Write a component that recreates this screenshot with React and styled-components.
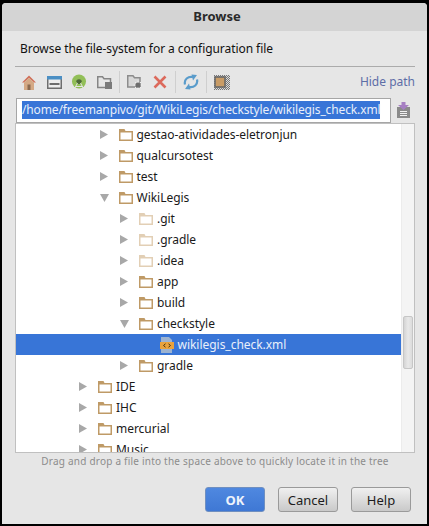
import React from 'react';
import styled, { createGlobalStyle } from 'styled-components';

const GlobalStyle = createGlobalStyle`
  html, body {
    margin: 0;
    padding: 0;
    width: 429px;
    height: 526px;
    overflow: hidden;
    background: #000;
  }
  * { box-sizing: border-box; }
`;

const Dialog = styled.div`
  width: 429px;
  height: 526px;
  padding: 3px 2px 2px 2px;
  background: #000;
  font-family: "Noto Sans", sans-serif;
  color: #1c1c1c;
`;

const Window = styled.div`
  height: 100%;
  display: flex;
  flex-direction: column;
  background: #e6e6e6;
  border-radius: 4px 4px 0 0;
  overflow: hidden;
`;

const TitleBar = styled.div`
  height: 28px;
  flex: none;
  display: flex;
  align-items: center;
  justify-content: center;
  padding: 0 0 2px 5px;
  background: #d4d4d4;
  font-size: 13px;
  font-weight: 700;
  color: #2a2a2a;
`;

const Content = styled.div`
  flex: 1;
  display: flex;
  flex-direction: column;
  padding: 0 12px 0 13px;
`;

const Description = styled.div`
  height: 35px;
  flex: none;
  display: flex;
  align-items: center;
  padding-left: 5px;
  font-size: 12px;
  letter-spacing: -0.06px;
  color: #111;
`;

const Toolbar = styled.div`
  height: 31px;
  flex: none;
  display: flex;
  align-items: center;
  gap: 1px;
  border-top: 1px solid #ababab;
  padding: 0 0 0 2px;
`;

const ToolIcon = styled.div`
  width: 24px;
  height: 22px;
  display: flex;
  align-items: center;
  justify-content: center;
`;

const ToolSeparator = styled.div`
  width: 1px;
  height: 22px;
  margin: 0 2px;
  background: #cfcfcf;
`;

const HidePath = styled.div`
  margin: 0 0 2px auto;
  font-size: 12px;
  color: #5d6da6;
`;

const PathRow = styled.div`
  height: 26px;
  flex: none;
  display: flex;
  align-items: center;
  gap: 0;
  padding-left: 1px;
`;

const PathField = styled.div`
  width: 383px;
  height: 25px;
  display: flex;
  align-items: center;
  padding-left: 5px;
  background: #fff;
  border: 1px solid #a6a6a6;
  font-size: 12px;
  letter-spacing: -0.13px;
  white-space: nowrap;
`;

const PathSelection = styled.span`
  background: #3875d7;
  color: #e8effa;
  line-height: 18px;
`;

const TreePanel = styled.div`
  height: 330px;
  flex: none;
  display: flex;
  background: #fff;
  border: 1px solid #c0c0c0;
  overflow: hidden;
`;

const TreeRows = styled.div`
  flex: 1;
  min-width: 0;
`;

const Row = styled.div`
  height: 21px;
  display: flex;
  align-items: center;
  padding-left: ${(p) => p.$indent}px;
  background: ${(p) => (p.$selected ? '#3875d7' : 'transparent')};
  color: ${(p) => (p.$selected ? '#e8effa' : '#1a1a1a')};
  font-size: 12px;
  letter-spacing: -0.03px;
`;

const ArrowSlot = styled.div`
  width: 19px;
  flex: none;
  display: flex;
  align-items: center;
`;

const RowLabel = styled.span`
  margin-left: 4px;
  white-space: nowrap;
`;

const ScrollTrack = styled.div`
  width: 13px;
  flex: none;
  padding: 192px 1px 0 1px;
  background: #f4f4f4;
  border-left: 1px solid #ececec;
`;

const ScrollThumb = styled.div`
  height: 53px;
  background: linear-gradient(to right, #d4d4d4, #e8e8e8 50%, #dcdcdc);
  border: 1px solid #c6c6c6;
  border-radius: 2px;
`;

const Hint = styled.div`
  height: 16px;
  flex: none;
  display: flex;
  align-items: center;
  justify-content: center;
  font-size: 10px;
  letter-spacing: 0.22px;
  color: #8c8c8c;
`;

const ButtonBar = styled.div`
  display: flex;
  justify-content: flex-end;
  gap: 13px;
  padding: 18px 4px 0 0;
`;

const Button = styled.button`
  width: 60px;
  height: 25px;
  padding: 0;
  font-family: inherit;
  font-size: 13px;
  font-weight: ${(p) => (p.$primary ? 700 : 400)};
  color: ${(p) => (p.$primary ? '#eef3fb' : '#1c1c1c')};
  background: ${(p) =>
    p.$primary
      ? 'linear-gradient(#4f88e0, #3f78d4)'
      : 'linear-gradient(#f0f0f0, #c9c9c9)'};
  border: 1px solid ${(p) => (p.$primary ? '#6f8fc0' : '#9a9a9a')};
  border-radius: 3px;
`;

const HomeIcon = () => (
  <svg width="14" height="15" viewBox="0 0 14 15">
    <path d="M7 0.5 L14 7.5 L12 7.5 L7 3 L2 7.5 L0 7.5 Z" fill="#d0705a" />
    <path d="M2 7.5 L7 3 L12 7.5 V15 H2 Z" fill="#d4a985" />
    <rect x="5.5" y="9.5" width="3" height="5.5" fill="#8a6a50" />
  </svg>
);

const WindowIcon = () => (
  <svg width="15" height="13" viewBox="0 0 15 13">
    <rect x="0.75" y="0.75" width="13.5" height="11.5" fill="#eeeeee" stroke="#6e6e6e" strokeWidth="1.5" />
    <rect x="0" y="0" width="15" height="3.5" fill="#4b8fc4" />
    <rect x="2.5" y="7" width="10" height="2" fill="#6e6e6e" />
  </svg>
);

const AndroidIcon = () => (
  <svg width="16" height="16" viewBox="0 0 16 16">
    <circle cx="8" cy="7.5" r="7" fill="#92bf58" />
    <path d="M5.2 8 A2.8 2.8 0 0 1 10.8 8 Z" fill="#4f6a3a" />
    <rect x="6" y="8" width="4" height="2" fill="#4f6a3a" />
    <path d="M6.5 9 L3 15.5 M9.5 9 L13 15.5 M4.5 12.5 H11.5" stroke="#e4e4e4" strokeWidth="1" fill="none" />
  </svg>
);

const NewFolderIcon = () => (
  <svg width="15" height="13" viewBox="0 0 15 13">
    <path d="M0.75 0.75 H5.5 L7 2.75 H13.5 V11.5 H0.75 Z" fill="#e6e6e6" stroke="#858585" strokeWidth="1.5" />
    <rect x="8" y="6" width="7" height="7" fill="#7a7a7a" />
  </svg>
);

const FolderGearIcon = () => (
  <svg width="16" height="15" viewBox="0 0 16 15">
    <path d="M0.75 0.75 H6 L7.5 2.75 H13 V12 H0.75 Z" fill="#d8d8d8" stroke="#8c8c8c" strokeWidth="1.5" />
    <path d="M11 5.5 V14.5 M6.5 10 H15.5 M8 7 L14 13 M14 7 L8 13" stroke="#eeeeee" strokeWidth="1" />
    <circle cx="11" cy="10" r="2.6" fill="#6e6e6e" />
  </svg>
);

const DeleteIcon = () => (
  <svg width="14" height="14" viewBox="0 0 14 14">
    <path d="M1.5 1.5 L12.5 12.5 M12.5 1.5 L1.5 12.5" stroke="#dc6a5c" strokeWidth="2.6" />
  </svg>
);

const RefreshIcon = () => (
  <svg width="16" height="16" viewBox="0 0 16 16" fill="none">
    <path d="M2 10.5 C0.8 5.5 5 2 10 3" stroke="#5a9ccb" strokeWidth="2.2" />
    <path d="M8.5 0.5 L14 1 L10 6.5 Z" fill="#5a9ccb" />
    <path d="M14 5.5 C15.2 10.5 11 14 6 13" stroke="#5a9ccb" strokeWidth="2.2" />
    <path d="M7.5 15.5 L2 15 L6 9.5 Z" fill="#5a9ccb" />
  </svg>
);

const TransparencyIcon = () => (
  <svg width="16" height="15" viewBox="0 0 16 15">
    <defs>
      <pattern id="checker" width="2" height="2" patternUnits="userSpaceOnUse">
        <rect width="2" height="2" fill="#dcdcdc" />
        <rect width="1" height="1" fill="#777" />
        <rect x="1" y="1" width="1" height="1" fill="#777" />
      </pattern>
    </defs>
    <rect width="16" height="15" fill="url(#checker)" />
    <rect x="1" y="2" width="10" height="10" fill="#c99c66" stroke="#6a6a6a" strokeWidth="1.6" />
  </svg>
);

const HistoryIcon = () => (
  <svg width="13" height="16" viewBox="0 0 13 16">
    <path d="M0 5 H13 V16 H0 Z" fill="#8a8a8a" />
    <path d="M3 9.5 H10 M3 11.5 H10 M3 13.5 H10" stroke="#f0f0f0" strokeWidth="1" />
    <path d="M4.5 0 H8.5 V3 H12 L6.5 8 L1 3 H4.5 Z" fill="#a67fc2" />
  </svg>
);

const Arrow = ({ open }) => (
  <svg width="9" height="9" viewBox="0 0 9 9">
    {open ? <path d="M0 1 H9 L4.5 9 Z" fill="#a8a8a8" /> : <path d="M0 0 L8 4.5 L0 9 Z" fill="#a8a8a8" />}
  </svg>
);

const FolderIcon = ({ faded }) => {
  const color = faded ? '#e2cfb5' : '#bf9a66';
  return (
    <svg width="14" height="12" viewBox="0 0 14 12" style={{ flex: 'none' }}>
      <path d="M0 0 H5.5 L6.5 2 H14 V12 H0 Z" fill={color} />
      <rect x="1.5" y="3.5" width="11" height="7" fill="#fff" />
    </svg>
  );
};

const XmlIcon = () => (
  <svg width="14" height="16" viewBox="0 0 14 16" style={{ flex: 'none' }}>
    <path d="M1 0 H9 L12 3 V16 H1 Z" fill="#9db3d0" />
    <rect x="0" y="5" width="14" height="7" fill="#e8a23c" />
    <path d="M5.5 6.8 L3.5 8.5 L5.5 10.2 M8.5 6.8 L10.5 8.5 L8.5 10.2" stroke="#4a3510" strokeWidth="1" fill="none" />
  </svg>
);

const rows = [
  { name: 'gestao-atividades-eletronjun', depth: 1 },
  { name: 'qualcursotest', depth: 1 },
  { name: 'test', depth: 1 },
  { name: 'WikiLegis', depth: 1, open: true },
  { name: '.git', depth: 2, faded: true },
  { name: '.gradle', depth: 2, faded: true },
  { name: '.idea', depth: 2, faded: true },
  { name: 'app', depth: 2 },
  { name: 'build', depth: 2 },
  { name: 'checkstyle', depth: 2, open: true },
  { name: 'wikilegis_check.xml', depth: 3, file: true, selected: true },
  { name: 'gradle', depth: 2 },
  { name: 'IDE', depth: 0 },
  { name: 'IHC', depth: 0 },
  { name: 'mercurial', depth: 0 },
  { name: 'Music', depth: 0 },
];

const App = () => {
  return (
    <Dialog>
      <GlobalStyle />
      <Window>
        <TitleBar>Browse</TitleBar>
        <Content>
          <Description>Browse the file-system for a configuration file</Description>
          <Toolbar>
            <ToolIcon><HomeIcon /></ToolIcon>
            <ToolIcon><WindowIcon /></ToolIcon>
            <ToolIcon><AndroidIcon /></ToolIcon>
            <ToolIcon><NewFolderIcon /></ToolIcon>
            <ToolSeparator />
            <ToolIcon><FolderGearIcon /></ToolIcon>
            <ToolIcon><DeleteIcon /></ToolIcon>
            <ToolSeparator />
            <ToolIcon><RefreshIcon /></ToolIcon>
            <ToolSeparator />
            <ToolIcon><TransparencyIcon /></ToolIcon>
            <HidePath>Hide path</HidePath>
          </Toolbar>
          <PathRow>
            <PathField>
              <PathSelection>/home/freemanpivo/git/WikiLegis/checkstyle/wikilegis_check.xml</PathSelection>
            </PathField>
            <ToolIcon><HistoryIcon /></ToolIcon>
          </PathRow>
          <TreePanel>
            <TreeRows>
              {rows.map((row) => (
                <Row key={row.name} $indent={63 + row.depth * 20.5} $selected={row.selected}>
                  <ArrowSlot>
                    {!row.file && <Arrow open={row.open} />}
                  </ArrowSlot>
                  {row.file ? <XmlIcon /> : <FolderIcon faded={row.faded} />}
                  <RowLabel>{row.name}</RowLabel>
                </Row>
              ))}
            </TreeRows>
            <ScrollTrack>
              <ScrollThumb />
            </ScrollTrack>
          </TreePanel>
          <Hint>Drag and drop a file into the space above to quickly locate it in the tree</Hint>
          <ButtonBar>
            <Button $primary>OK</Button>
            <Button>Cancel</Button>
            <Button>Help</Button>
          </ButtonBar>
        </Content>
      </Window>
    </Dialog>
  );
};

export default App;
